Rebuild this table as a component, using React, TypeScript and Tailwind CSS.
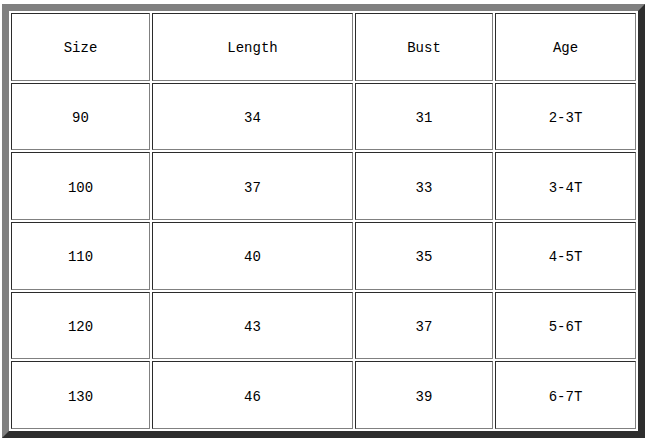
const headers = ['Size', 'Length', 'Bust', 'Age'];

const rows = [
  ['90', '34', '31', '2-3T'],
  ['100', '37', '33', '3-4T'],
  ['110', '40', '35', '4-5T'],
  ['120', '43', '37', '5-6T'],
  ['130', '46', '39', '6-7T'],
];

const colWidths = ['w-[139px]', 'w-[201px]', 'w-[138px]', 'w-[141px]'];

const cellClass = 'border border-t-[#2b2b2b] border-l-[#2b2b2b] border-r-[#808080] border-b-[#808080] text-center align-middle px-0 pb-0 pt-[4px]';

const App = () => (
  <div className="w-[649px] h-[442px] bg-white pl-[2px] pt-[4px] font-['Liberation_Mono',monospace] text-[14px] text-black">
    <table className="table-fixed border-separate border-spacing-[2px] w-[643px] h-[434px] border-[7px] border-t-[#808080] border-l-[#808080] border-r-[#2e2e2e] border-b-[#2e2e2e]">
      <colgroup>
        {colWidths.map((w) => (
          <col key={w} className={w} />
        ))}
      </colgroup>
      <tbody>
        <tr>
          {headers.map((h) => (
            <td key={h} className={cellClass}>{h}</td>
          ))}
        </tr>
        {rows.map((row) => (
          <tr key={row[0]}>
            {row.map((value, i) => (
              <td key={`${row[0]}-${i}`} className={cellClass}>{value}</td>
            ))}
          </tr>
        ))}
      </tbody>
    </table>
  </div>
);

export default App;
